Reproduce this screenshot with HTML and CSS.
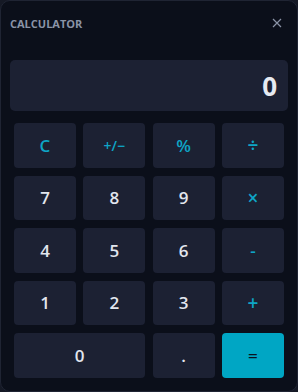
FILE: index.html
```html
<!DOCTYPE html>
<html>
<head>
    <meta charset="utf-8" />
    <link rel="stylesheet" href="styles.css">
</head>
<body>
    <div class="calc">
        <div class="calc_header">
            <span class="calc_title">CALCULATOR</span>
            <svg class="calc_close" width="10" height="10" viewBox="0 0 10 10">
                <path d="M1 1 L9 9 M9 1 L1 9" stroke="#8a93a6" stroke-width="1.2" fill="none" />
            </svg>
        </div>
        <div class="calc_display">0</div>
        <div class="keypad">
            <button class="key op">C</button>
            <button class="key op small">+/&minus;</button>
            <button class="key op">%</button>
            <button class="key op big">&divide;</button>
            <button class="key">7</button>
            <button class="key">8</button>
            <button class="key">9</button>
            <button class="key op big">&times;</button>
            <button class="key">4</button>
            <button class="key">5</button>
            <button class="key">6</button>
            <button class="key op">-</button>
            <button class="key">1</button>
            <button class="key">2</button>
            <button class="key">3</button>
            <button class="key op big">+</button>
            <button class="key wide">0</button>
            <button class="key">.</button>
            <button class="key equals">=</button>
        </div>
    </div>
</body>
</html>
```

FILE: styles.css
```css
body {
    margin: 0;
    background: #151925;
    font-family: "Open Sans", "DejaVu Sans", sans-serif;
}

.calc {
    width: 298px;
    height: 392px;
    box-sizing: border-box;
    background: #0b0f1a;
    border: 1px solid #1f2433;
    border-radius: 10px;
}

.calc_header {
    height: 44px;
    padding: 0 15px 0 9px;
    display: flex;
    align-items: center;
    justify-content: space-between;
}

.calc_title {
    font-size: 11px;
    font-weight: 700;
    color: #8a93a6;
}

.calc_display {
    margin: 15px 9px 0 9px;
    height: 51px;
    box-sizing: border-box;
    padding: 0 11px;
    background: #1c2133;
    border-radius: 5px;
    color: #e6eaf1;
    font-size: 26px;
    font-weight: 700;
    display: flex;
    align-items: center;
    justify-content: flex-end;
}

.keypad {
    margin-top: 12px;
    padding: 0 13px;
    display: grid;
    grid-template-columns: repeat(4, 1fr);
    grid-auto-rows: 44.5px;
    column-gap: 7.3px;
    row-gap: 8px;
}

.key {
    border: none;
    border-radius: 4px;
    background: #1c2133;
    color: #e2e6ee;
    font-family: "Open Sans", "DejaVu Sans", sans-serif;
    font-size: 17px;
    font-weight: 600;
    padding: 0;
}

.op {
    color: #0ea5c6;
}

.small {
    font-size: 14px;
}

.big {
    font-size: 19px;
}

.wide {
    grid-column: span 2;
}

.equals {
    background: #00a6c4;
    color: #0b1220;
}
```
